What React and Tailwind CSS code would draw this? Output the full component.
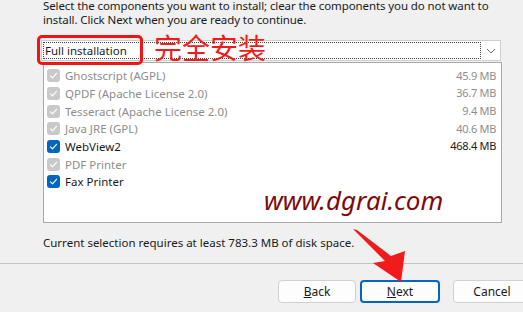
import React from 'react'

const items = [
  { name: 'Ghostscript (AGPL)', size: '45.9 MB', disabled: true },
  { name: 'QPDF (Apache License 2.0)', size: '36.7 MB', disabled: true },
  { name: 'Tesseract (Apache License 2.0)', size: '9.4 MB', disabled: true },
  { name: 'Java JRE (GPL)', size: '40.6 MB', disabled: true },
  { name: 'WebView2', size: '468.4 MB', disabled: false },
  { name: 'PDF Printer', size: '', disabled: true },
  { name: 'Fax Printer', size: '', disabled: false },
]

const Check = ({ disabled }) => (
  <div
    className={`w-[13px] h-[13px] rounded-[3px] flex items-center justify-center ${
      disabled ? 'bg-[#c9c9c9]' : 'bg-[#0067c0]'
    }`}
  >
    <svg width="11" height="11" viewBox="0 0 11 11" fill="none">
      <path d="M2.5 5.8 L4.5 7.8 L8.5 3.3" stroke="white" strokeWidth="1.2" strokeLinecap="round" strokeLinejoin="round" />
    </svg>
  </div>
)

const Button = ({ children, primary, width }) => (
  <button
    className={`${width} h-[23px] shrink-0 rounded-[4px] bg-[#fdfdfd] text-[12px] text-[#1a1a1a] flex items-center justify-center ${
      primary ? 'border-2 border-[#0067c0]' : 'border border-[#d0d0d0]'
    }`}
  >
    {children}
  </button>
)

export default function App() {
  return (
    <div
      className="relative w-[523px] h-[312px] overflow-hidden bg-[#f0f0f0] text-[#1a1a1a] text-[12px]"
      style={{ fontFamily: '"Noto Sans", "Liberation Sans", sans-serif' }}
    >
      {/* Intro text (first line is clipped by the window top) */}
      <div className="pl-[43px] mt-[-1px] leading-[14px] text-[11.5px] tracking-[-0.1px]">
        <p>Select the components you want to install; clear the components you do not want to</p>
        <p>install. Click Next when you are ready to continue.</p>
      </div>

      {/* Setup type dropdown */}
      <div className="ml-[41px] mr-[22px] mt-[13px] h-[21px] bg-white border border-[#cfcfcf] flex items-center">
        <div className="ml-[1px] h-[17px] w-[438px] border border-dotted border-[#444] flex items-center pl-[1px] text-[11.5px]">
          Full installation
        </div>
        <div className="flex-1 flex items-center justify-center">
          <svg width="10" height="6" viewBox="0 0 10 6" fill="none">
            <path d="M1 1 L5 5 L9 1" stroke="#6b6b6b" strokeWidth="1" />
          </svg>
        </div>
      </div>

      {/* Component list */}
      <div className="ml-[43px] mr-[21px] mt-[1px] h-[161px] bg-white border border-[#a9a9a9] pt-[4px] pl-[3px] pr-[5px]">
        {items.map((it) => (
          <div key={it.name} className="h-[17.7px] flex items-center">
            <Check disabled={it.disabled} />
            <span className={`ml-[5px] flex-1 text-[11.5px] ${it.disabled ? 'text-[#8d8d8d]' : 'text-[#1a1a1a]'}`}>
              {it.name}
            </span>
            <span className={`text-[11px] tracking-[-0.3px] ${it.disabled ? 'text-[#8d8d8d]' : 'text-[#1a1a1a]'}`}>
              {it.size}
            </span>
          </div>
        ))}
      </div>

      <p className="pl-[43px] mt-[12px] leading-[16px] text-[11.5px]">
        Current selection requires at least 783.3 MB of disk space.
      </p>

      <div className="mt-[12px] border-t border-[#c4c4c4]" />

      {/* Buttons */}
      <div className="mt-[16px] ml-[278px] flex">
        <Button width="w-[78px]">
          <span><span className="underline">B</span>ack</span>
        </Button>
        <div className="w-[4px] shrink-0" />
        <Button width="w-[80px]" primary>
          <span><span className="underline">N</span>ext</span>
        </Button>
        <div className="w-[13px] shrink-0" />
        <Button width="w-[78px]">Cancel</Button>
      </div>

      {/* Annotations */}
      <div className="absolute left-[37px] top-[35px] w-[106px] h-[30px] border-[3px] border-[#f01414] rounded-[5px]" />
      <div
        className="absolute left-[154px] top-[29px] text-[28px] leading-[37px] text-[#f21b1b]"
        style={{ fontFamily: '"Noto Sans CJK SC", sans-serif' }}
      >
        完全安装
      </div>
      <div
        className="absolute left-[264px] top-[184px] text-[26px] leading-[32px] text-[#7d0b0b] italic"
        style={{ fontFamily: '"Noto Sans", sans-serif' }}
      >
        www.dgrai.com
      </div>
      <svg className="absolute left-0 top-0" width="523" height="312" viewBox="0 0 523 312">
        <polygon points="353,229 357,230 391,256 405,251 401,282 373,263 385,261" fill="#f21b1b" />
      </svg>
    </div>
  )
}
